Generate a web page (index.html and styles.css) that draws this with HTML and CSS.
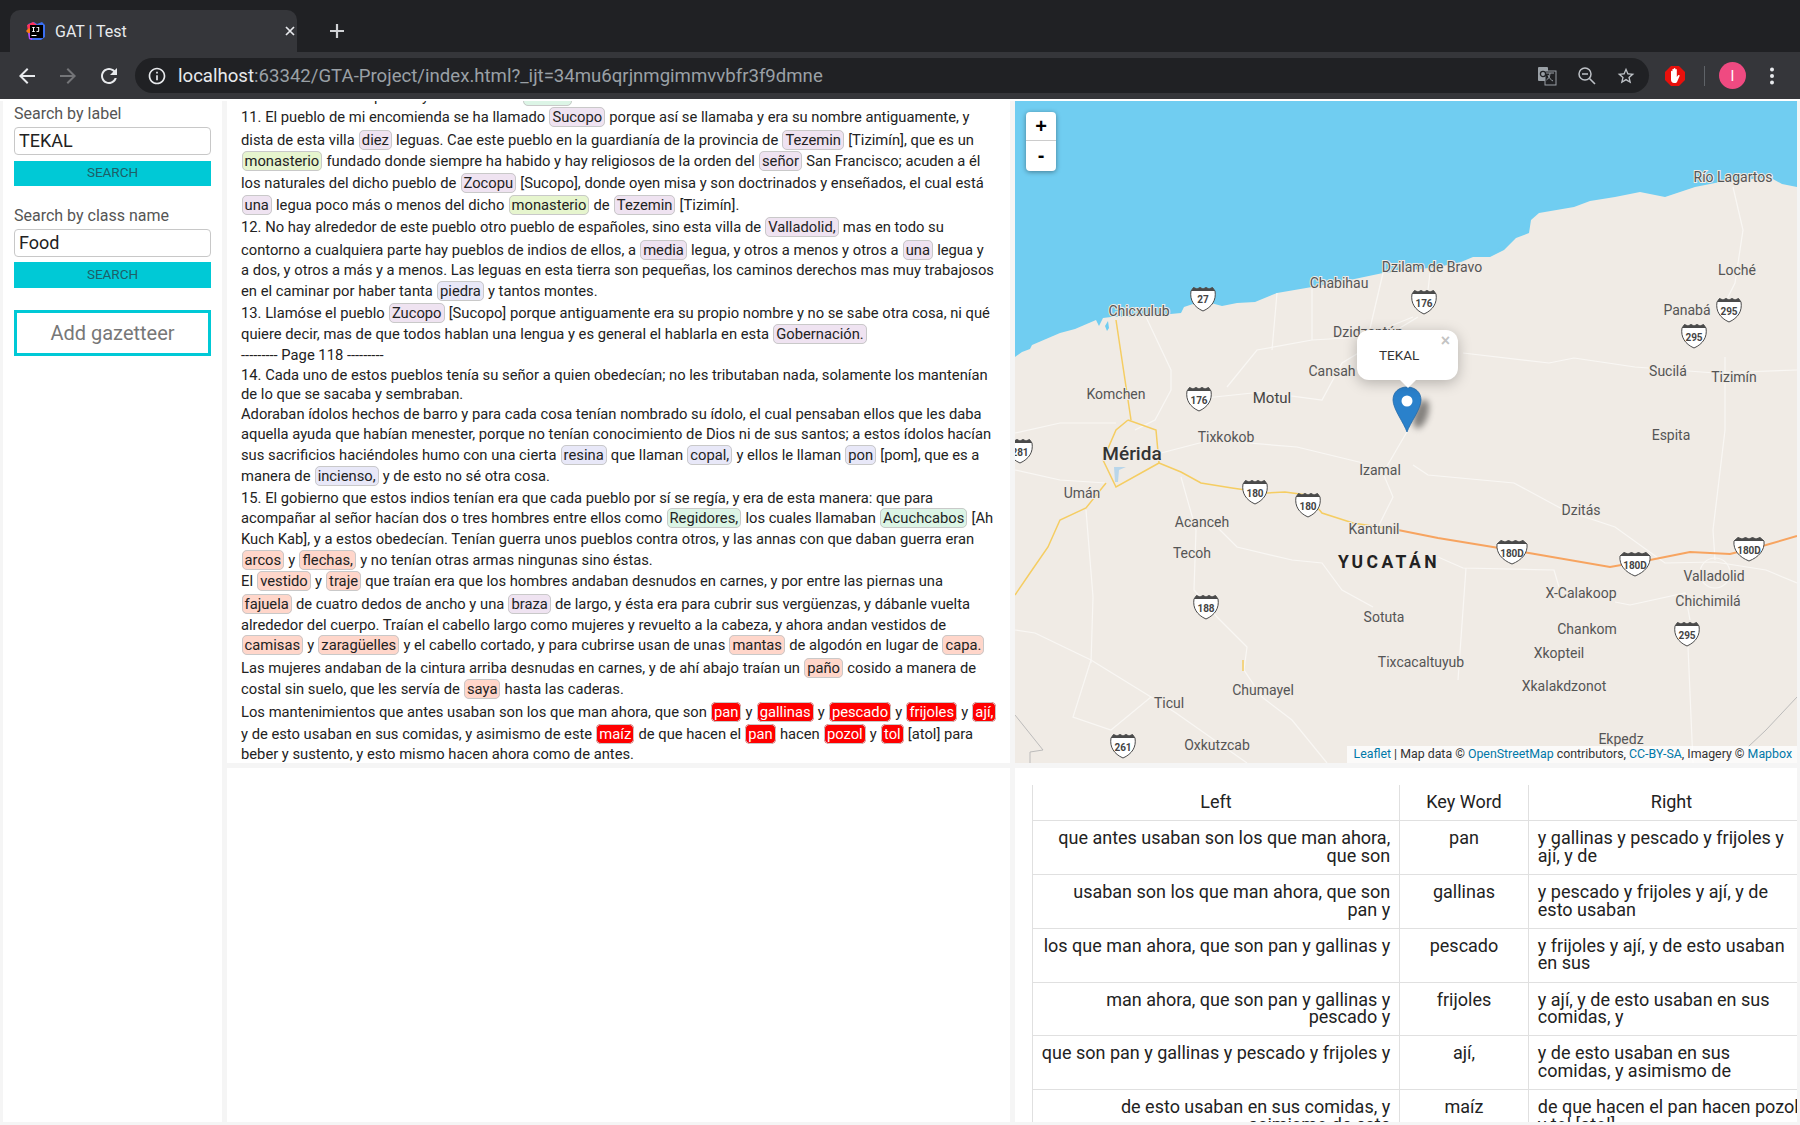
FILE: index.html
```html
<!DOCTYPE html>
<html lang="es">
<head>
<meta charset="utf-8">
<title>GAT | Test</title>
<link rel="stylesheet" href="styles.css">
</head>
<body>
<header class="chrome">
  <div class="tabstrip">
    <div class="tab">
      <svg class="favicon" viewBox="0 0 20 20"><path d="M2 3 8 1l3 2 5-2 3 3v12l-4 3H6l-3-1z" fill="#3b6ff0"/><path d="M1 4l6-3 4 3-3 6-6 1z" fill="#fe315d"/><path d="M0 10l3-3 3 3-3 3z" fill="#f97a12"/><path d="M2 12l5 1-1 6-3-1z" fill="#b74af7"/><rect x="4" y="4" width="13" height="13" fill="#000"/><rect x="5.500" y="14" width="5" height="1" fill="#fff"/><path d="M6 6h3v.8H8v3.400h1v.8H6v-.8h1V6.800H6zM10.500 6h2.700v4c0 .8-.6 1.100-1.400 1.100s-1.300-.3-1.500-.9l.8-.4c.1.300.3.400.6.400.3 0 .5-.1.500-.4V6.800h-1.700z" fill="#fff"/></svg>
      <span class="tab-title">GAT | Test</span>
      <svg class="tab-close" viewBox="0 0 12 12"><path d="M2 2l8 8M10 2l-8 8" stroke="#e8eaed" stroke-width="1.700" fill="none"/></svg>
    </div>
    <svg class="newtab" viewBox="0 0 16 16"><path d="M8 1v14M1 8h14" stroke="#d0d2d5" stroke-width="2.200" fill="none"/></svg>
  </div>
  <div class="toolbar">
    <svg class="nav" viewBox="0 0 24 24"><path fill="#e8eaed" d="M20 11H7.830l5.590-5.590L12 4l-8 8 8 8 1.410-1.410L7.830 13H20v-2z"/></svg>
    <svg class="nav" viewBox="0 0 24 24"><path fill="#747578" d="M12 4l-1.410 1.410L16.170 11H4v2h12.170l-5.580 5.590L12 20l8-8z"/></svg>
    <svg class="nav" viewBox="0 0 24 24"><path fill="#e8eaed" d="M17.650 6.350C16.200 4.900 14.210 4 12 4c-4.420 0-7.990 3.580-7.990 8s3.570 8 7.990 8c3.730 0 6.840-2.550 7.730-6h-2.080c-.82 2.330-3.040 4-5.650 4-3.310 0-6-2.690-6-6s2.690-6 6-6c1.660 0 3.140.69 4.220 1.780L13 11h7V4l-2.350 2.350z"/></svg>
    <div class="omnibox">
      <svg class="info" viewBox="0 0 24 24"><path fill="#e8eaed" d="M11 7h2v2h-2zm0 4h2v6h-2zm1-9C6.480 2 2 6.480 2 12s4.480 10 10 10 10-4.480 10-10S17.520 2 12 2zm0 18c-4.410 0-8-3.590-8-8s3.590-8 8-8 8 3.590 8 8-3.590 8-8 8z"/></svg>
      <span class="url"><span class="host">localhost</span>:63342/GTA-Project/index.html?_ijt=34mu6qrjnmgimmvvbfr3f9dmne</span>
      <span class="omni-icons">
        <svg class="omni-i" viewBox="0 0 20 20"><rect x="1" y="1" width="10" height="14" rx="1" fill="#9aa0a6"/><rect x="8" y="5" width="11" height="14" fill="#202124" stroke="#9aa0a6" stroke-width="1"/><path d="M9 7h8M13 7c0 4-2 6-3.500 7M11 9c1 3 3 5 5 6" stroke="#9aa0a6" fill="none"/><circle cx="6" cy="8" r="2.600" fill="none" stroke="#202124" stroke-width="1.300"/></svg>
        <svg class="omni-i" viewBox="0 0 20 20"><circle cx="8" cy="8" r="6" fill="none" stroke="#bdc1c6" stroke-width="1.500"/><path d="M5 8h6M12.500 12.500 18 18" stroke="#bdc1c6" stroke-width="1.600" fill="none"/></svg>
        <svg class="omni-i" viewBox="0 0 24 24"><path fill="#bdc1c6" d="M22 9.240l-7.190-.62L12 2 9.190 8.630 2 9.240l5.460 4.730L5.820 21 12 17.270 18.180 21l-1.630-7.030L22 9.240zM12 15.400l-3.760 2.270 1-4.280-3.320-2.880 4.380-.38L12 6.100l1.710 4.040 4.380.38-3.320 2.880 1 4.280L12 15.400z"/></svg>
      </span>
    </div>
    <svg class="adblock" viewBox="0 0 20 20"><path d="M6 0h8l6 6v8l-6 6H6l-6-6V6z" fill="#e8100c"/><path d="M6 9V5.500c0-1 1.400-1 1.400 0V9V3.500c0-1 1.500-1 1.500 0V9V2.800c0-1 1.500-1 1.500 0V9V3.800c0-1 1.400-1 1.400 0V11l1.300-1.700c.8-.9 2 0 1.400 .9L12 16c-.5.8-1 1-2 1H9c-2 0-3-1.500-3-3.500z" fill="#fff"/></svg>
    <span class="tb-divider"></span>
    <span class="avatar">I</span>
    <svg class="dots" viewBox="0 0 24 24"><circle cx="12" cy="5.500" r="2" fill="#e8eaed"/><circle cx="12" cy="12" r="2" fill="#e8eaed"/><circle cx="12" cy="18.500" r="2" fill="#e8eaed"/></svg>
  </div>
</header>

<main class="app">
  <aside class="sidebar">
    <label class="field-label">Search by label</label>
    <input class="field-input" value="TEKAL">
    <button class="search-btn">SEARCH</button>
    <label class="field-label second">Search by class name</label>
    <input class="field-input" value="Food">
    <button class="search-btn tall">SEARCH</button>
    <button class="add-btn">Add gazetteer</button>
  </aside>

  <section class="panel text-panel">
    <div class="doc">
      <div class="ln h21">10. La tierra de este pueblo y de sus indios <mark class="tag mint">monte</mark></div>
      <div class="ln h23">11. El pueblo de mi encomienda se ha llamado <mark class="tag lilac">Sucopo</mark> porque así se llamaba y era su nombre antiguamente, y</div>
      <div class="ln h21">dista de esta villa <mark class="tag lilac">diez</mark> leguas. Cae este pueblo en la guardianía de la provincia de <mark class="tag lilac">Tezemin</mark> [Tizimín], que es un</div>
      <div class="ln h22"><mark class="tag lime">monasterio</mark> fundado donde siempre ha habido y hay religiosos de la orden del <mark class="tag lilac">señor</mark> San Francisco; acuden a él</div>
      <div class="ln h22">los naturales del dicho pueblo de <mark class="tag lilac">Zocopu</mark> [Sucopo], donde oyen misa y son doctrinados y enseñados, el cual está</div>
      <div class="ln h22"><mark class="tag lilac">una</mark> legua poco más o menos del dicho <mark class="tag lime">monasterio</mark> de <mark class="tag lilac">Tezemin</mark> [Tizimín].</div>
      <div class="ln h23">12. No hay alrededor de este pueblo otro pueblo de españoles, sino esta villa de <mark class="tag lilac">Valladolid,</mark> mas en todo su</div>
      <div class="ln h20">contorno a cualquiera parte hay pueblos de indios de ellos, a <mark class="tag lilac">media</mark> legua, y otros a menos y otros a <mark class="tag lilac">una</mark> legua y</div>
      <div class="ln h21">a dos, y otros a más y a menos. Las leguas en esta tierra son pequeñas, los caminos derechos mas muy trabajosos</div>
      <div class="ln h22">en el caminar por haber tanta <mark class="tag blue">piedra</mark> y tantos montes.</div>
      <div class="ln h21">13. Llamóse el pueblo <mark class="tag lilac">Zucopo</mark> [Sucopo] porque antiguamente era su propio nombre y no se sabe otra cosa, ni qué</div>
      <div class="ln h21">quiere decir, mas de que todos hablan una lengua y es general el hablarla en esta <mark class="tag lilac">Gobernación.</mark></div>
      <div class="ln h20">--------- Page 118 ---------</div>
      <div class="ln h19">14. Cada uno de estos pueblos tenía su señor a quien obedecían; no les tributaban nada, solamente los mantenían</div>
      <div class="ln h20">de lo que se sacaba y sembraban.</div>
      <div class="ln h20">Adoraban ídolos hechos de barro y para cada cosa tenían nombrado su ídolo, el cual pensaban ellos que les daba</div>
      <div class="ln h21">aquella ayuda que habían menester, porque no tenían conocimiento de Dios ni de sus santos; a estos ídolos hacían</div>
      <div class="ln h21">sus sacrificios haciéndoles humo con una cierta <mark class="tag blue">resina</mark> que llaman <mark class="tag blue">copal,</mark> y ellos le llaman <mark class="tag blue">pon</mark> [pom], que es a</div>
      <div class="ln h22">manera de <mark class="tag blue">incienso,</mark> y de esto no sé otra cosa.</div>
      <div class="ln h20">15. El gobierno que estos indios tenían era que cada pueblo por sí se regía, y era de esta manera: que para</div>
      <div class="ln h21">acompañar al señor hacían dos o tres hombres entre ellos como <mark class="tag mint">Regidores,</mark> los cuales llamaban <mark class="tag mint">Acuchcabos</mark> [Ah</div>
      <div class="ln h21">Kuch Kab], y a estos obedecían. Tenían guerra unos pueblos contra otros, y las annas con que daban guerra eran</div>
      <div class="ln h21"><mark class="tag salmon">arcos</mark> y <mark class="tag salmon">flechas,</mark> y no tenían otras armas ningunas sino éstas.</div>
      <div class="ln h23">El <mark class="tag salmon">vestido</mark> y <mark class="tag salmon">traje</mark> que traían era que los hombres andaban desnudos en carnes, y por entre las piernas una</div>
      <div class="ln h21"><mark class="tag salmon">fajuela</mark> de cuatro dedos de ancho y una <mark class="tag lilac">braza</mark> de largo, y ésta era para cubrir sus vergüenzas, y dábanle vuelta</div>
      <div class="ln h20">alrededor del cuerpo. Traían el cabello largo como mujeres y revuelto a la cabeza, y ahora andan vestidos de</div>
      <div class="ln h23"><mark class="tag salmon">camisas</mark> y <mark class="tag salmon">zaragüelles</mark> y el cabello cortado, y para cubrirse usan de unas <mark class="tag salmon">mantas</mark> de algodón en lugar de <mark class="tag salmon">capa.</mark></div>
      <div class="ln h21">Las mujeres andaban de la cintura arriba desnudas en carnes, y de ahí abajo traían un <mark class="tag salmon">paño</mark> cosido a manera de</div>
      <div class="ln h23">costal sin suelo, que les servía de <mark class="tag salmon">saya</mark> hasta las caderas.</div>
      <div class="ln h22">Los mantenimientos que antes usaban son los que man ahora, que son <mark class="tag red">pan</mark> y <mark class="tag red">gallinas</mark> y <mark class="tag red">pescado</mark> y <mark class="tag red">frijoles</mark> y <mark class="tag red">ají,</mark></div>
      <div class="ln h20">y de esto usaban en sus comidas, y asimismo de este <mark class="tag red">maíz</mark> de que hacen el <mark class="tag red">pan</mark> hacen <mark class="tag red">pozol</mark> y <mark class="tag red">tol</mark> [atol] para</div>
      <div class="ln h20">beber y sustento, y esto mismo hacen ahora como de antes.</div>
    </div>
  </section>

  <section class="panel map-panel">
    <svg class="map" viewBox="1015 101 782 662" preserveAspectRatio="none">
      <rect x="1015" y="101" width="782" height="662" fill="#70cdf1"/>
      <path fill="#f0ebe5" d="M1015 357 1022 352 1030 349 1032 345 1060 333 1075 329 1096 320 1099 326 1103 318 1111 317 1150 316 1181 313 1184 307 1196 303 1203 308 1211 303 1222 306 1237 303 1255 302 1277 293 1312 287 1345 281 1383 273 1438 267 1461 262 1473 257 1490 257 1504 250 1516 238 1529 233 1531 220 1539 213 1574 207 1590 201 1615 197 1640 192 1665 197 1695 187 1730 180 1771 178 1782 184 1797 187V763H1015Z"/>
      <path fill="#70cdf1" d="M1526 218l4-4-3 14-6 5zM1497 250l5-6 1 2-4 5zM1105 326l3-5 1 7-2 3z"/>
      <path fill="#b9d6ea" d="M1114 467h12l-7 3-1 12h-3z"/>
      <g class="roads">
        <polyline points="1413,317 1363,337 1312,340 1257,350 1227,387"/>
        <polyline points="1463,353 1549,363 1574,358 1635,367 1675,370 1715,373 1797,370"/>
        <polyline points="1733,187 1743,230 1735,283 1725,303"/>
        <polyline points="1725,357 1725,430 1713,530 1715,560"/>
        <polyline points="1186,400 1262,392 1322,400 1342,363 1418,317"/>
        <polyline points="1146,317 1171,370 1171,390 1155,420 1135,430"/>
        <polyline points="1277,293 1272,350"/>
        <polyline points="1312,287 1312,340"/>
        <polyline points="1383,273 1368,337"/>
        <polyline points="1430,273 1428,290"/>
        <polyline points="1015,433 1060,423 1116,423"/>
        <polyline points="1161,453 1211,440 1297,447 1363,463"/>
        <polyline points="1413,465 1428,475 1514,483 1564,510 1615,527 1665,563 1715,562 1766,570 1797,583"/>
        <polyline points="1383,473 1393,497 1378,527"/>
        <polyline points="1383,473 1408,430"/>
        <polyline points="1181,477 1196,530 1194,590 1217,617 1247,647 1244,670 1262,697 1292,720 1327,763"/>
        <polyline points="1217,527 1237,547 1292,560 1322,563 1342,590 1373,607"/>
        <polyline points="1438,557 1463,568 1554,570 1559,587"/>
        <polyline points="1466,568 1458,680"/>
        <polyline points="1015,630 1035,633 1091,660 1151,697 1176,713 1247,763"/>
        <polyline points="1091,660 1073,717 1111,730 1151,697"/>
        <polyline points="1615,602 1630,605 1685,593 1690,620"/>
        <polyline points="1688,647 1693,763"/>
        <polyline points="1086,510 1093,597 1091,663"/>
        <polyline points="1015,470 1060,480 1106,483"/>
        <circle cx="1715" cy="573" r="15"/>
      </g>
      <g class="border">
        <polyline points="1015,715 1043,750 1030,752 1030,763"/>
        <polyline points="1797,697 1766,730 1748,747"/>
      </g>
      <g class="yellow">
        <polyline points="1116,320 1131,420"/>
        <polyline points="1128,420 1156,430 1159,463 1116,487 1103,460 1116,430 1128,420"/>
        <polyline points="1159,463 1181,472 1201,483 1232,488 1267,493 1285,492 1307,495 1322,513 1353,523 1398,530"/>
        <polyline points="1106,483 1086,508 1060,520 1048,547 1030,573 1015,595"/>
        <polyline points="1243,660 1243,671"/>
      </g>
      <polyline class="orange" points="1398,530 1438,538 1499,548 1529,553 1610,567 1650,560 1690,552 1730,554 1766,545 1797,536"/>

      <g class="labels">
        <text x="1733" y="182">Río Lagartos</text>
        <text x="1432" y="272">Dzilam de Bravo</text>
        <text x="1339" y="288">Chabihau</text>
        <text x="1737" y="275">Loché</text>
        <text x="1139" y="316">Chicxulub</text>
        <text x="1687" y="315">Panabá</text>
        <text x="1368" y="337">Dzidzantún</text>
        <text x="1332" y="376">Cansah</text>
        <text x="1668" y="376">Sucilá</text>
        <text x="1734" y="382">Tizimín</text>
        <text x="1116" y="399">Komchen</text>
        <text x="1272" y="403" class="big">Motul</text>
        <text x="1226" y="442">Tixkokob</text>
        <text x="1671" y="440">Espita</text>
        <text x="1132" y="460" class="city">Mérida</text>
        <text x="1380" y="475">Izamal</text>
        <text x="1082" y="498">Umán</text>
        <text x="1581" y="515">Dzitás</text>
        <text x="1202" y="527">Acanceh</text>
        <text x="1374" y="534">Kantunil</text>
        <text x="1192" y="558">Tecoh</text>
        <text x="1389" y="568" class="state">YUCATÁN</text>
        <text x="1714" y="581">Valladolid</text>
        <text x="1581" y="598">X-Calakoop</text>
        <text x="1708" y="606">Chichimilá</text>
        <text x="1384" y="622">Sotuta</text>
        <text x="1587" y="634">Chankom</text>
        <text x="1559" y="658">Xkopteil</text>
        <text x="1421" y="667">Tixcacaltuyub</text>
        <text x="1564" y="691">Xkalakdzonot</text>
        <text x="1263" y="695">Chumayel</text>
        <text x="1169" y="708">Ticul</text>
        <text x="1621" y="744">Ekpedz</text>
        <text x="1217" y="750">Oxkutzcab</text>
      </g>

      <defs>
        <g id="shield"><path d="M-12,-8 L-9.500,-11.500 -6,-10 -3,-11.500 0,-10 3,-11.500 6,-10 9.500,-11.500 12,-8 C13.500,1 9,8 0,12 C-9,8 -13.500,1 -12,-8Z" fill="#fff" stroke="#4a4a4a" stroke-width="1"/><path d="M-12,-8 L-9.500,-11.500 -6,-10 -3,-11.500 0,-10 3,-11.500 6,-10 9.500,-11.500 12,-8 Z" fill="#4a4a4a"/></g>
        <g id="shield-wide"><path d="M-15,-8 L-11,-11.500 -7,-10 -3.500,-11.500 0,-10 3.500,-11.500 7,-10 11,-11.500 15,-8 C16,1 10,8 0,12 C-10,8 -16,1 -15,-8Z" fill="#fff" stroke="#4a4a4a" stroke-width="1"/><path d="M-15,-8 L-11,-11.500 -7,-10 -3.500,-11.500 0,-10 3.500,-11.500 7,-10 11,-11.500 15,-8 Z" fill="#4a4a4a"/></g>
      </defs>
      <g class="shields">
        <use href="#shield" x="1203" y="299"/><text x="1203" y="303">27</text>
        <use href="#shield" x="1424" y="302"/><text x="1424" y="307">176</text>
        <use href="#shield" x="1199" y="399"/><text x="1199" y="404">176</text>
        <use href="#shield" x="1729" y="310"/><text x="1729" y="315">295</text>
        <use href="#shield" x="1694" y="336"/><text x="1694" y="341">295</text>
        <use href="#shield" x="1020" y="451"/><text x="1020" y="456">281</text>
        <use href="#shield" x="1255" y="492"/><text x="1255" y="497">180</text>
        <use href="#shield" x="1308" y="505"/><text x="1308" y="510">180</text>
        <use href="#shield-wide" x="1512" y="552"/><text x="1512" y="557">180D</text>
        <use href="#shield-wide" x="1635" y="564"/><text x="1635" y="569">180D</text>
        <use href="#shield-wide" x="1749" y="549"/><text x="1749" y="554">180D</text>
        <use href="#shield" x="1206" y="607"/><text x="1206" y="612">188</text>
        <use href="#shield" x="1687" y="634"/><text x="1687" y="639">295</text>
        <use href="#shield" x="1123" y="746"/><text x="1123" y="751">261</text>
      </g>

      <ellipse class="marker-shadow" cx="1421" cy="414" rx="7" ry="15" transform="rotate(18 1421 414)"/>
      <path d="M1407 432c-3-9-14-23-14-32 0-8 6-13 14-13s14 5 14 13c0 9-11 23-14 32z" fill="#2a81cb" stroke="#2369a8" stroke-width=".8"/>
      <circle cx="1407" cy="401" r="5.500" fill="#fff"/>
    </svg>

    <div class="zoom-ctl">
      <span class="zoom-btn zoom-in">+</span>
      <span class="zoom-btn zoom-out">-</span>
    </div>
    <div class="popup">
      <span class="popup-close">×</span>
      <span class="popup-text">TEKAL</span>
      <span class="popup-tip"></span>
    </div>
    <div class="attribution"><a>Leaflet</a> | Map data © <a>OpenStreetMap</a> contributors, <a>CC-BY-SA</a>, Imagery © <a>Mapbox</a></div>
  </section>

  <section class="panel empty-panel"></section>

  <section class="panel table-panel">
    <table class="kwic">
      <colgroup><col class="c-left"><col class="c-key"><col class="c-right"></colgroup>
      <thead><tr><th>Left</th><th>Key Word</th><th>Right</th></tr></thead>
      <tbody>
        <tr><td class="l">que antes usaban son los que man ahora, que son</td><td class="k">pan</td><td class="r">y gallinas y pescado y frijoles y ají, y de</td></tr>
        <tr><td class="l">usaban son los que man ahora, que son pan&nbsp;y</td><td class="k">gallinas</td><td class="r">y pescado y frijoles y ají, y de esto usaban</td></tr>
        <tr><td class="l">los que man ahora, que son pan y gallinas y</td><td class="k">pescado</td><td class="r">y frijoles y ají, y de esto usaban en sus</td></tr>
        <tr><td class="l">man ahora, que son pan y gallinas y pescado y</td><td class="k">frijoles</td><td class="r">y ají, y de esto usaban en sus comidas, y</td></tr>
        <tr><td class="l">que son pan y gallinas y pescado y frijoles y</td><td class="k">ají,</td><td class="r">y de esto usaban en sus comidas, y asimismo de</td></tr>
        <tr><td class="l">de esto usaban en sus comidas, y asimismo de este</td><td class="k">maíz</td><td class="r">de que hacen el pan hacen pozol y tol [atol]</td></tr>
      </tbody>
    </table>
  </section>
</main>
</body>
</html>
```
FILE: styles.css
```css
* { box-sizing: border-box; }
html, body { margin: 0; padding: 0; height: 100%; overflow: hidden; }
body { background: #f5f5f5; font-family: Roboto, "Liberation Sans", sans-serif; width: 1800px; height: 1125px; }

/* browser chrome */
.chrome { height: 99px; background: #35363a; display: flex; flex-direction: column; }
.tabstrip { height: 52px; background: #202124; display: flex; align-items: flex-end; padding-left: 10px; }
.tab { width: 287px; height: 42px; background: #35363a; border-radius: 10px 10px 0 0; display: flex; align-items: center; padding: 0 0 0 16px; }
.favicon { width: 20px; height: 20px; flex: none; }
.tab-title { color: #e8eaed; font: 16px Roboto, sans-serif; margin-left: 9px; flex: 1; }
.tab-close { width: 12px; height: 12px; margin-right: 1px; }
.newtab { width: 16px; height: 16px; margin: 0 0 13px 32px; }
.toolbar { height: 47px; display: flex; align-items: center; padding-left: 15px; }
.nav { width: 24px; height: 24px; margin-right: 17px; flex: none; }
.omnibox { width: 1514px; height: 35px; margin-left: -3px; border-radius: 18px; background: #202124; display: flex; align-items: center; padding: 0 13px 0 12px; flex: none; }
.info { width: 20px; height: 20px; flex: none; }
.url { margin-left: 11px; color: #9aa0a6; font: 18.6px Roboto, sans-serif; white-space: nowrap; }
.host { color: #e8eaed; }
.omni-icons { margin-left: auto; display: flex; align-items: center; gap: 19.5px; }
.omni-i { width: 20px; height: 20px; }
.adblock { width: 20px; height: 20px; margin-left: 16px; flex: none; }
.tb-divider { width: 1px; height: 20px; background: #5f6368; margin-left: 19px; flex: none; }
.avatar { width: 27px; height: 27px; border-radius: 50%; background: #ef4a81; color: #fff; font-size: 14px; display: flex; align-items: center; justify-content: center; margin-left: 14px; flex: none; }
.dots { width: 24px; height: 24px; margin-left: 14px; flex: none; }

/* grid */
.app { display: grid; grid-template-columns: 219px 783px 782px; grid-template-rows: 662px 354px; column-gap: 5px; row-gap: 5px; padding: 2px 3px 0 3px; background: linear-gradient(#fff 2px, #f5f5f5 2px); }
.panel { background: #fff; overflow: hidden; position: relative; }

/* sidebar */
.sidebar { grid-row: 1 / 3; background: #fff; padding: 3px 11px 0 11px; display: flex; flex-direction: column; align-items: stretch; }
.field-label { font-size: 16px; line-height: 19px; color: #555; margin-bottom: 4px; }
.field-label.second { margin-top: 20px; }
.field-input { height: 28px; border: 1px solid #c8c8c8; border-radius: 4px; padding: 0 4px 2px; font: 18px Roboto, sans-serif; color: #222; outline: none; }
.search-btn { height: 25px; margin-top: 6px; border: 0; background: #00c9d6; color: #1e5f68; font: 13.5px Roboto, sans-serif; padding: 0 0 3px; }
.search-btn.tall { height: 26px; margin-top: 5px; }
.add-btn { height: 46px; margin-top: 22px; border: 3px solid #00c9d6; background: #fff; color: #777; font: 20px Roboto, sans-serif; padding: 0; }

/* document */
.text-panel { padding-left: 14px; font-size: 14.75px; color: #222; }
.doc { margin-top: -15px; }
.ln { line-height: 20px; white-space: nowrap; }
.h19 { height: 19px; } .h20 { height: 20px; } .h21 { height: 21px; } .h22 { height: 22px; } .h23 { height: 23px; }
.tag { color: inherit; border: 1px solid #c9c9c9; border-radius: 5px; padding: 0 2px; margin: 0 .5px; }
.tag.lilac { background: #efe3f1; }
.tag.lime { background: #e6f5ce; }
.tag.blue { background: #e8e8f8; }
.tag.mint { background: #dcf5e6; }
.tag.salmon { background: #ffd6ca; }
.tag.red { background: #ff0000; color: #fff; }

/* map */
.map { display: block; width: 782px; height: 662px; }
.roads polyline, .roads circle { fill: none; stroke: #f9f7f4; stroke-width: 1.200; }
.border polyline { fill: none; stroke: #b5b5b5; stroke-width: .9; }
.yellow polyline { fill: none; stroke: #f5cd62; stroke-width: 1.500; }
.orange { fill: none; stroke: #f7a460; stroke-width: 2; }
.labels text { font: 14px Roboto, sans-serif; fill: #555; text-anchor: middle; paint-order: stroke; stroke: #f0ebe5; stroke-width: 2; }
.labels .big { font-size: 15px; fill: #444; }
.labels .city { font-size: 19px; font-weight: 500; fill: #333; }
.labels .state { font-size: 17.5px; font-weight: 700; fill: #222; letter-spacing: 3.5px; }
.shields text { font: 700 10px Roboto, sans-serif; fill: #444; text-anchor: middle; }
.marker-shadow { fill: rgba(0,0,0,.45); filter: blur(3px); }
.zoom-ctl { position: absolute; left: 11px; top: 11px; width: 30px; border-radius: 4px; background: #fff; box-shadow: 0 1px 5px rgba(0,0,0,.4); display: flex; flex-direction: column; }
.zoom-btn { height: 30px; display: flex; align-items: center; justify-content: center; font: 700 20px "Liberation Sans", sans-serif; color: #000; }
.zoom-out { padding-bottom: 2px; }
.zoom-in { height: 29px; border-bottom: 1px solid #ccc; }
.popup { position: absolute; left: 342px; top: 229px; width: 101px; height: 50px; background: #fff; border-radius: 12px; box-shadow: 0 3px 14px rgba(0,0,0,.25); }
.popup-text { position: absolute; left: 22px; top: 17px; font-size: 13.5px; line-height: 16px; color: #333; }
.popup-close { position: absolute; right: 8px; top: 2px; font: 700 16px "Liberation Sans", sans-serif; color: #c3c3c3; }
.popup-tip { position: absolute; left: 41px; top: 48px; width: 0; height: 0; border-left: 10px solid transparent; border-right: 10px solid transparent; border-top: 10px solid #fff; }
.attribution { position: absolute; right: 0; bottom: 0; height: 17px; padding: 0 5px 0 7px; background: rgba(255,255,255,.75); font: 12.35px/17px Roboto, sans-serif; color: #333; white-space: nowrap; }
.attribution a { color: #0078a8; }

/* concordance table */
.table-panel { padding: 17px 0 0 17px; }
.kwic { table-layout: fixed; width: 782px; border-collapse: collapse; font-size: 18px; line-height: 17.6px; color: #222; }
.c-left { width: 367px; } .c-key { width: 129px; } .c-right { width: 286px; }
.kwic th, .kwic td { padding: 8px 8.8px 9.6px; border: 1px solid #e0e0e0; vertical-align: top; font-weight: 400; }
.kwic thead th { border-top: 0; text-align: center; }
.kwic .l { text-align: right; padding-left: 5px; }
.kwic .k { text-align: center; }
.kwic .r { padding-right: 12px; }
```
